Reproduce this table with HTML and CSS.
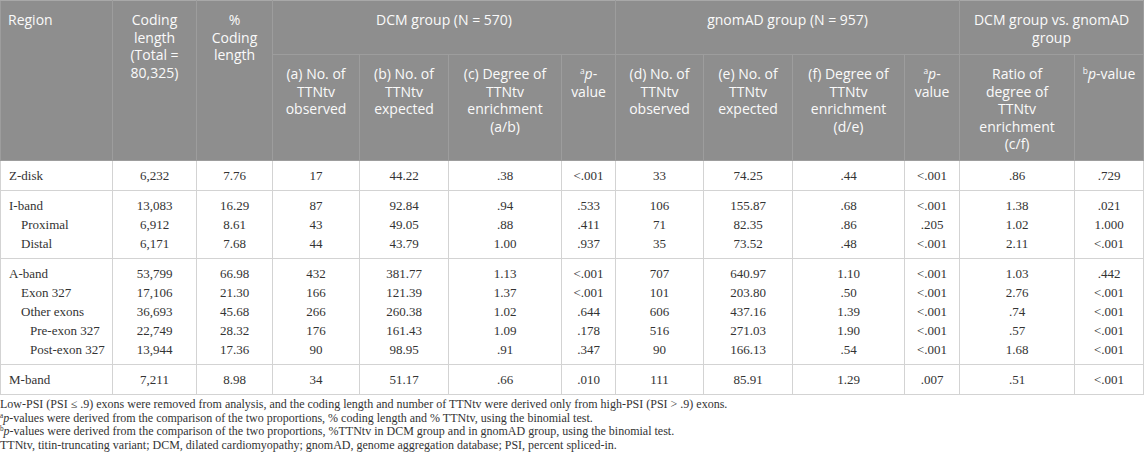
FILE: index.html
```html
<!DOCTYPE html>
<html lang="en">
<head>
  <meta charset="UTF-8" />
  <title>TTNtv enrichment by region</title>
  <link rel="stylesheet" href="styles.css">
</head>
<body>
  <table class="data-table">
    <colgroup>
      <col style="width:112px"><col style="width:84px"><col style="width:76px">
      <col style="width:87px"><col style="width:89px"><col style="width:113px"><col style="width:54px">
      <col style="width:88px"><col style="width:89px"><col style="width:112px"><col style="width:55px">
      <col style="width:115px"><col style="width:69px">
    </colgroup>
    <thead>
      <tr class="group-row">
        <th rowspan="2" class="left">Region</th>
        <th rowspan="2">Coding<br>length<br>(Total =<br>80,325)</th>
        <th rowspan="2">%<br>Coding<br>length</th>
        <th colspan="4">DCM group (N = 570)</th>
        <th colspan="4">gnomAD group (N = 957)</th>
        <th colspan="2">DCM group vs. gnomAD<br>group</th>
      </tr>
      <tr class="sub-row">
        <th>(a) No. of<br>TTNtv<br>observed</th>
        <th>(b) No. of<br>TTNtv<br>expected</th>
        <th>(c) Degree of<br>TTNtv<br>enrichment<br>(a/b)</th>
        <th><sup>a</sup><i>p</i>-<br>value</th>
        <th>(d) No. of<br>TTNtv<br>observed</th>
        <th>(e) No. of<br>TTNtv<br>expected</th>
        <th>(f) Degree of<br>TTNtv<br>enrichment<br>(d/e)</th>
        <th><sup>a</sup><i>p</i>-<br>value</th>
        <th>Ratio of<br>degree of<br>TTNtv<br>enrichment<br>(c/f)</th>
        <th><sup>b</sup><i>p</i>-value</th>
      </tr>
    </thead>
    <tbody>
      <tr><td class="left">Z-disk</td><td>6,232</td><td>7.76</td><td>17</td><td>44.22</td><td>.38</td><td>&lt;.001</td><td>33</td><td>74.25</td><td>.44</td><td>&lt;.001</td><td>.86</td><td>.729</td></tr>
    </tbody>
    <tbody>
      <tr><td class="left">I-band</td><td>13,083</td><td>16.29</td><td>87</td><td>92.84</td><td>.94</td><td>.533</td><td>106</td><td>155.87</td><td>.68</td><td>&lt;.001</td><td>1.38</td><td>.021</td></tr>
      <tr><td class="left indent-1">Proximal</td><td>6,912</td><td>8.61</td><td>43</td><td>49.05</td><td>.88</td><td>.411</td><td>71</td><td>82.35</td><td>.86</td><td>.205</td><td>1.02</td><td>1.000</td></tr>
      <tr><td class="left indent-1">Distal</td><td>6,171</td><td>7.68</td><td>44</td><td>43.79</td><td>1.00</td><td>.937</td><td>35</td><td>73.52</td><td>.48</td><td>&lt;.001</td><td>2.11</td><td>&lt;.001</td></tr>
    </tbody>
    <tbody>
      <tr><td class="left">A-band</td><td>53,799</td><td>66.98</td><td>432</td><td>381.77</td><td>1.13</td><td>&lt;.001</td><td>707</td><td>640.97</td><td>1.10</td><td>&lt;.001</td><td>1.03</td><td>.442</td></tr>
      <tr><td class="left indent-1">Exon 327</td><td>17,106</td><td>21.30</td><td>166</td><td>121.39</td><td>1.37</td><td>&lt;.001</td><td>101</td><td>203.80</td><td>.50</td><td>&lt;.001</td><td>2.76</td><td>&lt;.001</td></tr>
      <tr><td class="left indent-1">Other exons</td><td>36,693</td><td>45.68</td><td>266</td><td>260.38</td><td>1.02</td><td>.644</td><td>606</td><td>437.16</td><td>1.39</td><td>&lt;.001</td><td>.74</td><td>&lt;.001</td></tr>
      <tr><td class="left indent-2">Pre-exon 327</td><td>22,749</td><td>28.32</td><td>176</td><td>161.43</td><td>1.09</td><td>.178</td><td>516</td><td>271.03</td><td>1.90</td><td>&lt;.001</td><td>.57</td><td>&lt;.001</td></tr>
      <tr><td class="left indent-2">Post-exon 327</td><td>13,944</td><td>17.36</td><td>90</td><td>98.95</td><td>.91</td><td>.347</td><td>90</td><td>166.13</td><td>.54</td><td>&lt;.001</td><td>1.68</td><td>&lt;.001</td></tr>
    </tbody>
    <tbody>
      <tr><td class="left">M-band</td><td>7,211</td><td>8.98</td><td>34</td><td>51.17</td><td>.66</td><td>.010</td><td>111</td><td>85.91</td><td>1.29</td><td>.007</td><td>.51</td><td>&lt;.001</td></tr>
    </tbody>
  </table>

  <div class="notes">
    <p>Low-PSI (PSI ≤ .9) exons were removed from analysis, and the coding length and number of TTNtv were derived only from high-PSI (PSI &gt; .9) exons.</p>
    <p><sup>a</sup><i>p</i>-values were derived from the comparison of the two proportions, % coding length and % TTNtv, using the binomial test.</p>
    <p><sup>b</sup><i>p</i>-values were derived from the comparison of the two proportions, %TTNtv in DCM group and in gnomAD group, using the binomial test.</p>
    <p>TTNtv, titin-truncating variant; DCM, dilated cardiomyopathy; gnomAD, genome aggregation database; PSI, percent spliced-in.</p>
  </div>
</body>
</html>
```

FILE: styles.css
```css
* {
  box-sizing: border-box;
  margin: 0;
  padding: 0;
}

body {
  background: #fff;
  color: #333;
  font-family: "Liberation Serif", "Times New Roman", serif;
}

.data-table {
  width: 1143px;
  table-layout: fixed;
  border-collapse: collapse;
}

.data-table th {
  background: #8e8e8e;
  color: #fafafa;
  font-family: "Open Sans", "Noto Sans", sans-serif;
  font-weight: normal;
  font-size: 14px;
  line-height: 17.5px;
  text-align: center;
  vertical-align: top;
  padding: 10px 2px 0;
  border: 1px solid #9d9d9d;
}

.data-table .group-row {
  height: 54px;
}

.data-table .group-row th {
  border-top-color: #a8a8a8;
}

.data-table .sub-row {
  height: 106px;
}

.data-table th.left {
  text-align: left;
  padding-left: 7px;
}

.data-table th sup,
.notes sup {
  font-size: 0.6em;
  vertical-align: 0.55em;
  line-height: 0;
}

.data-table td {
  font-size: 13px;
  line-height: 19px;
  text-align: center;
  padding: 0 2px;
  border-left: 1px solid #d3d3d3;
  border-right: 1px solid #d3d3d3;
  white-space: nowrap;
}

.data-table tbody {
  border-top: 1px solid #d3d3d3;
  border-bottom: 1px solid #d3d3d3;
}

.data-table tbody tr:first-child td {
  padding-top: 5px;
}

.data-table tbody tr:last-child td {
  padding-bottom: 5px;
}

.data-table td.left {
  text-align: left;
  padding-left: 8px;
}

.data-table td.indent-1 {
  padding-left: 20px;
}

.data-table td.indent-2 {
  padding-left: 29px;
}

.notes {
  padding-top: 3px;
  font-size: 12px;
  line-height: 13.7px;
  color: #333;
}
```
